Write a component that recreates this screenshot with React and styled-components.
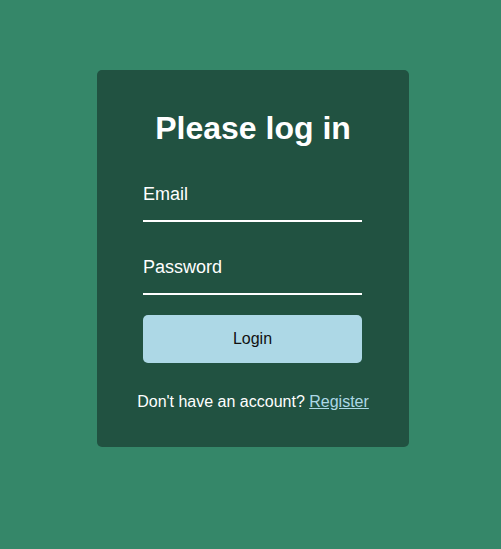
import React from "react";
import styled, { createGlobalStyle } from "styled-components";

const GlobalStyle = createGlobalStyle`
  * {
    box-sizing: border-box;
  }
  body {
    margin: 0;
    background-color: #358769;
    font-family: "Liberation Sans", Arial, sans-serif;
  }
`;

const Page = styled.div`
  display: flex;
  justify-content: center;
  min-height: 549px;
  padding: 70px 0 0 5px;
`;

const Card = styled.div`
  width: 312px;
  height: 377px;
  background-color: #215241;
  border-radius: 5px;
  display: flex;
  flex-direction: column;
  align-items: center;
  padding-top: 40px;
`;

const Title = styled.h1`
  margin: 0 0 27px;
  font-size: 32px;
  font-weight: bold;
  color: white;
`;

const Form = styled.form`
  width: 219px;
  margin-right: 1px;
  display: flex;
  flex-direction: column;
`;

const Input = styled.input`
  width: 100%;
  padding: 10px 0 15px;
  margin-bottom: ${(props) => props.gap}px;
  font-family: inherit;
  font-size: 18px;
  color: white;
  background: transparent;
  border: none;
  border-bottom: 2px solid white;
  outline: none;

  &::placeholder {
    color: white;
    opacity: 1;
  }
`;

const Button = styled.button`
  width: 100%;
  height: 48px;
  border: none;
  border-radius: 5px;
  background-color: #add8e6;
  color: #111;
  font-family: inherit;
  font-size: 16px;
  cursor: pointer;
`;

const Footer = styled.p`
  margin: 30px 0 0;
  font-size: 16px;
  color: white;
  text-align: center;
`;

const Link = styled.a`
  color: #add8e6;
  text-decoration: underline;
`;

const App = () => (
  <>
    <GlobalStyle />
    <Page>
      <Card>
        <Title>Please log in</Title>
        <Form onSubmit={(e) => e.preventDefault()}>
          <Input type="email" placeholder="Email" gap={25} />
          <Input type="password" placeholder="Password" gap={20} />
          <Button type="submit">Login</Button>
        </Form>
        <Footer>
          Don't have an account? <Link href="#">Register</Link>
        </Footer>
      </Card>
    </Page>
  </>
);

export default App;
